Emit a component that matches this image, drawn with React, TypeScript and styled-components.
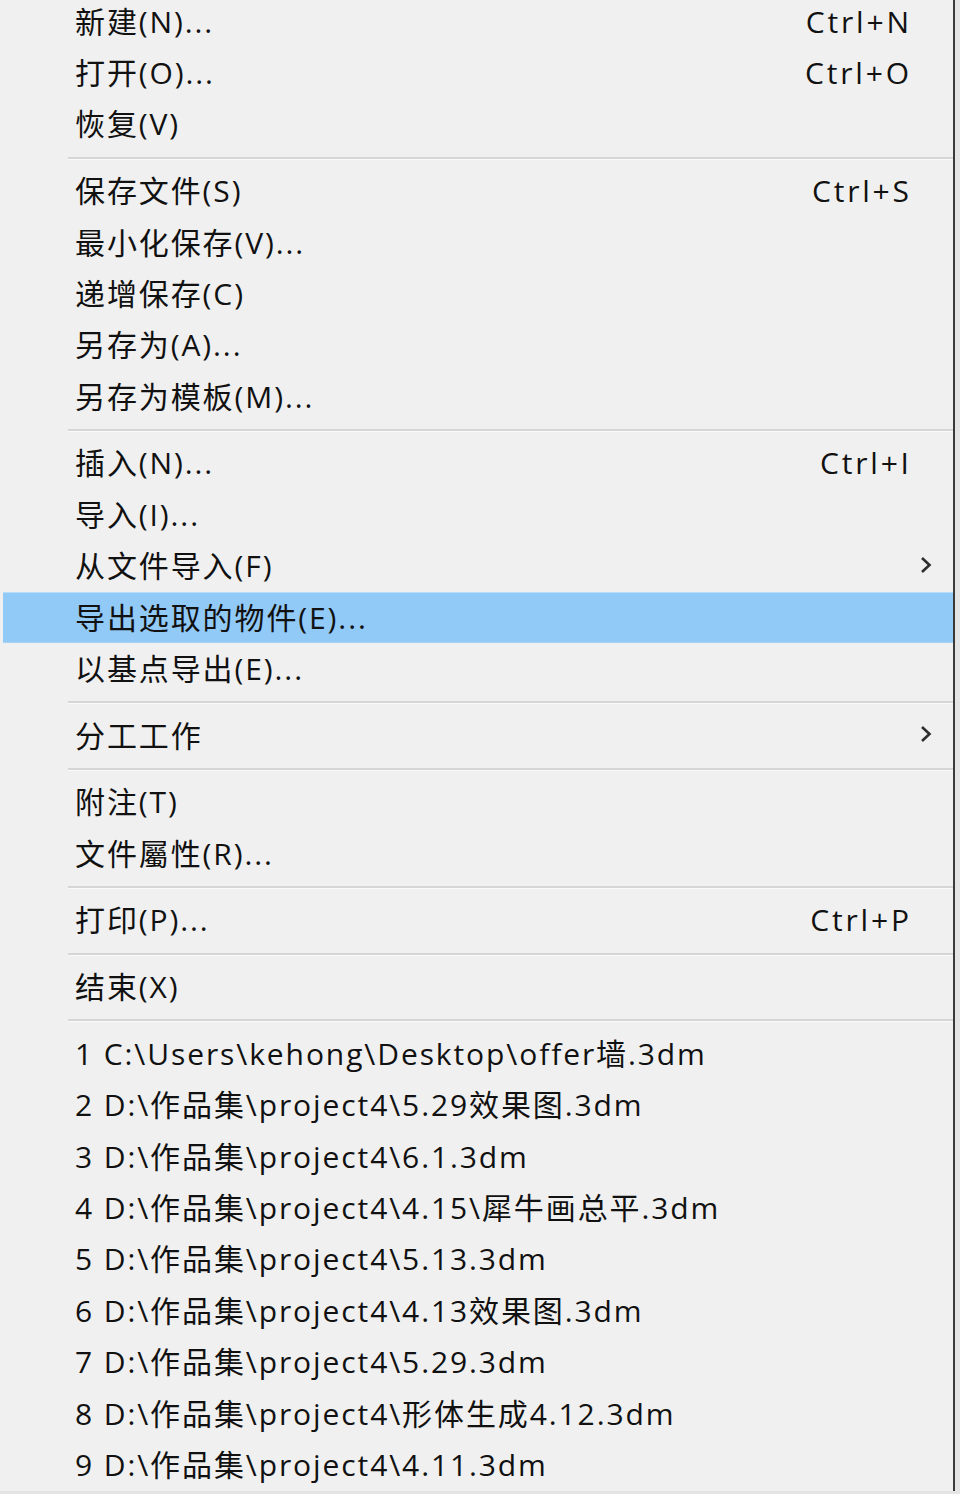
import React from "react";
import styled, { createGlobalStyle } from "styled-components";

const Global = createGlobalStyle`
  html, body { margin: 0; padding: 0; background: #e4e4e4; }
  body { overflow: hidden; }
`;

const Menu = styled.div`
  width: 950px;
  margin-top: -4px;
  padding: 0 0 0 3px;
  background: #f0f0f0;
  border-right: 2px solid #3a3a3a;
  box-sizing: content-box;
  font-family: "Open Sans", "Noto Sans CJK SC", sans-serif;
  font-size: 30px;
  color: #111111;
`;

const Row = styled.div<{ $active?: boolean }>`
  height: 51.4px;
  display: grid;
  grid-template-columns: 1fr auto 44px;
  align-items: center;
  padding-left: 72px;
  background: ${(p) => (p.$active ? "#91c9f7" : "transparent")};
  box-shadow: ${(p) => (p.$active ? "inset 0 1px 0 #b9dcf9, inset 0 -1px 0 #a9d2f5" : "none")};
`;

const Label = styled.span`
  white-space: nowrap;
  line-height: 1;
  letter-spacing: 1.9px;
`;

const Shortcut = styled.span`
  white-space: nowrap;
  line-height: 1;
  letter-spacing: 2.8px;
  margin-right: -2.8px;
`;

const ArrowCell = styled.span`
  display: flex;
  align-items: center;
  padding-left: 9px;
  margin-top: -3px;
`;

const Separator = styled.div`
  height: 15.3px;
  display: flex;
  align-items: center;
  padding-left: 65px;
  &::after {
    content: "";
    flex: 1;
    height: 2px;
    background: #d6d6d6;
    box-shadow: 0 1px 0 #fafafa;
  }
`;

const Chevron = () => (
  <svg width="16" height="20" viewBox="0 0 16 20">
    <path d="M4 3 L11.5 10 L4 17" fill="none" stroke="#2e2e2e" strokeWidth="2.6" />
  </svg>
);

type Item = { label: string; shortcut?: string; sub?: boolean; active?: boolean } | "sep";

const items: Item[] = [
  { label: "新建(N)...", shortcut: "Ctrl+N" },
  { label: "打开(O)...", shortcut: "Ctrl+O" },
  { label: "恢复(V)" },
  "sep",
  { label: "保存文件(S)", shortcut: "Ctrl+S" },
  { label: "最小化保存(V)..." },
  { label: "递增保存(C)" },
  { label: "另存为(A)..." },
  { label: "另存为模板(M)..." },
  "sep",
  { label: "插入(N)...", shortcut: "Ctrl+I" },
  { label: "导入(I)..." },
  { label: "从文件导入(F)", sub: true },
  { label: "导出选取的物件(E)...", active: true },
  { label: "以基点导出(E)..." },
  "sep",
  { label: "分工工作", sub: true },
  "sep",
  { label: "附注(T)" },
  { label: "文件屬性(R)..." },
  "sep",
  { label: "打印(P)...", shortcut: "Ctrl+P" },
  "sep",
  { label: "结束(X)" },
  "sep",
  { label: "1 C:\\Users\\kehong\\Desktop\\offer墙.3dm" },
  { label: "2 D:\\作品集\\project4\\5.29效果图.3dm" },
  { label: "3 D:\\作品集\\project4\\6.1.3dm" },
  { label: "4 D:\\作品集\\project4\\4.15\\犀牛画总平.3dm" },
  { label: "5 D:\\作品集\\project4\\5.13.3dm" },
  { label: "6 D:\\作品集\\project4\\4.13效果图.3dm" },
  { label: "7 D:\\作品集\\project4\\5.29.3dm" },
  { label: "8 D:\\作品集\\project4\\形体生成4.12.3dm" },
  { label: "9 D:\\作品集\\project4\\4.11.3dm" },
];

export default function App() {
  return (
    <>
      <Global />
      <Menu>
        {items.map((it, i) =>
          it === "sep" ? (
            <Separator key={i} />
          ) : (
            <Row key={i} $active={it.active}>
              <Label>{it.label}</Label>
              <Shortcut>{it.shortcut ?? ""}</Shortcut>
              <ArrowCell>{it.sub ? <Chevron /> : null}</ArrowCell>
            </Row>
          )
        )}
      </Menu>
    </>
  );
}
